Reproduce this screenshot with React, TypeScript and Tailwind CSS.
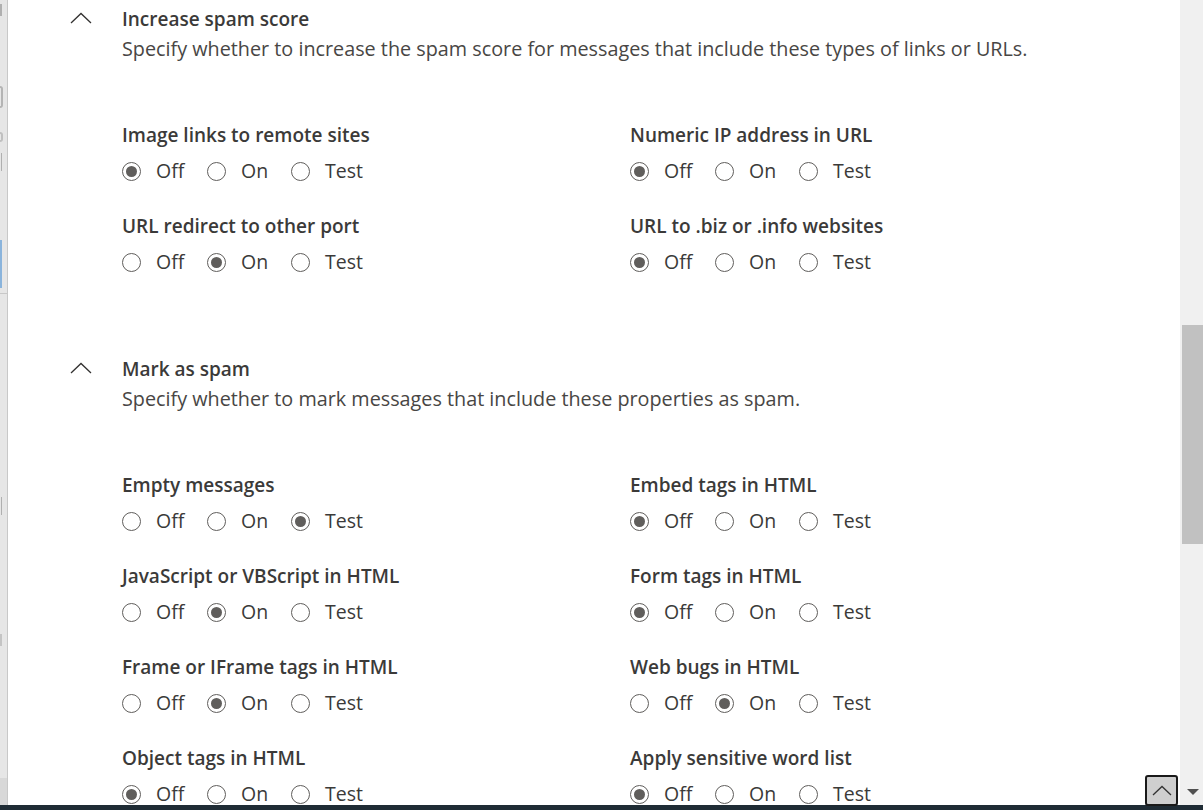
import React from "react";

type Setting = { label: string; value: "Off" | "On" | "Test" };

const spamScore: Setting[] = [
    { label: "Image links to remote sites", value: "Off" },
    { label: "Numeric IP address in URL", value: "Off" },
    { label: "URL redirect to other port", value: "On" },
    { label: "URL to .biz or .info websites", value: "Off" },
];

const markAsSpam: Setting[] = [
    { label: "Empty messages", value: "Test" },
    { label: "Embed tags in HTML", value: "Off" },
    { label: "JavaScript or VBScript in HTML", value: "On" },
    { label: "Form tags in HTML", value: "Off" },
    { label: "Frame or IFrame tags in HTML", value: "On" },
    { label: "Web bugs in HTML", value: "On" },
    { label: "Object tags in HTML", value: "Off" },
    { label: "Apply sensitive word list", value: "Off" },
];

const Chevron = () => (
    <svg width="22" height="12" viewBox="0 0 22 12" fill="none">
        <polyline points="1,11 11,1.5 21,11" stroke="#323130" strokeWidth="1.3" />
    </svg>
);

const Radio = ({ checked }: { checked: boolean }) => (
    <span className="flex h-[19px] w-[19px] items-center justify-center rounded-full border border-[#605e5c] bg-white">
        {checked && <span className="h-[11px] w-[11px] rounded-full bg-[#605e5c]" />}
    </span>
);

const Item = ({ setting }: { setting: Setting }) => (
    <div className="flex flex-col">
        <div className="flex h-[30px] items-center text-[19px] font-semibold text-[#3b3a39]">{setting.label}</div>
        <div className="mt-[6px] flex h-[30px] items-center text-[19.5px] text-[#3b3a39]">
            {(["Off", "On", "Test"] as const).map((opt, i) => (
                <label key={opt} className={`flex items-center gap-[15px] ${i === 0 ? "w-[85px]" : "w-[84px]"}`}>
                    <Radio checked={setting.value === opt} />
                    <span>{opt}</span>
                </label>
            ))}
        </div>
    </div>
);

const Section = ({ title, desc, items }: { title: string; desc: string; items: Setting[] }) => (
    <section className="flex">
        <div className="flex w-[114px] shrink-0 justify-end pr-[30px] pt-[8px]">
            <Chevron />
        </div>
        <div className="flex flex-col">
            <h2 className="flex h-[30px] items-center text-[19px] font-semibold text-[#3b3a39]">{title}</h2>
            <p className="flex h-[30px] items-center text-[19.8px] text-[#484644]">{desc}</p>
            <div className="mt-[56px] grid grid-cols-[508px_508px] gap-y-[25px]">
                {items.map((s) => (
                    <Item key={s.label} setting={s} />
                ))}
            </div>
        </div>
    </section>
);

export default function App() {
    return (
        <div className="relative flex h-[810px] w-[1203px] flex-col overflow-hidden bg-white" style={{ fontFamily: '"Open Sans", "Noto Sans", sans-serif' }}>
            <div className="flex min-h-0 flex-1">
                {/* clipped side panel behind the flyout */}
                <div className="relative w-[8px] shrink-0 overflow-hidden border-r border-[#c8c8c8] bg-[#e6e6e6]">
                    <div className="absolute left-0 top-[4px] h-[12px] w-[2px] bg-[#b0b0b0]" />
                    <div className="absolute left-0 top-[86px] h-[22px] w-[3px] rounded-r-full border-y-2 border-r-2 border-[#b4b4b4]" />
                    <div className="absolute left-0 top-[132px] h-[10px] w-[3px] rounded-r-full border-2 border-l-0 border-[#c0c0c0]" />
                    <div className="absolute left-[1px] top-[153px] h-[18px] w-px bg-[#b0b0b0]" />
                    <div className="absolute left-0 top-[240px] h-[48px] w-[2px] bg-[#8ab4dc]" />
                    <div className="absolute left-0 top-[293px] h-px w-[8px] bg-[#c8c8c8]" />
                    <div className="absolute left-[1px] top-[497px] h-[18px] w-px bg-[#b0b0b0]" />
                    <div className="absolute left-0 top-[634px] h-[12px] w-[2px] bg-[#c4c4c4]" />
                    <div className="absolute left-0 top-[778px] h-[27px] w-[8px] bg-[#d8d8d8]" />
                </div>

                <main className="flex flex-1 flex-col pt-[4px]">
                    <Section
                        title="Increase spam score"
                        desc="Specify whether to increase the spam score for messages that include these types of links or URLs."
                        items={spamScore}
                    />
                    <div className="h-[77px] shrink-0" />
                    <Section title="Mark as spam" desc="Specify whether to mark messages that include these properties as spam." items={markAsSpam} />
                </main>

                {/* scrollbar */}
                <div className="relative w-[23px] shrink-0 bg-[#f0f0f0]">
                    <div className="absolute left-[2px] right-0 top-[325px] h-[219px] bg-[#c1c1c1]" />
                    <div className="absolute bottom-[10px] left-[7px] h-0 w-0 border-x-[6px] border-t-[6px] border-x-transparent border-t-[#505050]" />
                </div>
            </div>
            <div className="h-[5px] shrink-0 bg-[#1f2c35]" />

            {/* back to top */}
            <button className="absolute bottom-[4px] left-[1145px] flex h-[31px] w-[33px] items-center justify-center rounded-[3px] border-2 border-[#1a1a1a] bg-[#cfcfcf]">
                <svg width="20" height="11" viewBox="0 0 20 11" fill="none">
                    <polyline points="1,10 10,1.5 19,10" stroke="#333" strokeWidth="1.3" />
                </svg>
            </button>
        </div>
    );
}
